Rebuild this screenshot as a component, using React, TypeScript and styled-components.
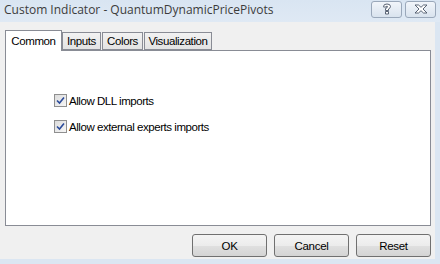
import React from 'react';
import styled, { createGlobalStyle } from 'styled-components';

const GlobalStyle = createGlobalStyle`
  html, body {
    margin: 0;
    padding: 0;
    background: #f0f0f0;
  }
`;

const uiFont = `'Liberation Sans', Arial, sans-serif`;

const Window = styled.div`
  width: 440px;
  height: 264px;
  display: flex;
  flex-direction: column;
  background: #dbe6f2;
  box-sizing: border-box;
  overflow: hidden;
`;

const TitleBar = styled.div`
  height: 22px;
  display: flex;
  align-items: center;
  justify-content: space-between;
  padding: 0 4px 0 4px;
  background: linear-gradient(#d9e5f2, #dfe9f4);
`;

const Title = styled.span`
  font-family: 'Open Sans', 'Noto Sans', sans-serif;
  font-size: 12px;
  color: #3c3c3c;
  margin-top: -3px;
`;

const TitleButtons = styled.div`
  display: flex;
  gap: 3px;
  margin-top: -4px;
`;

const TitleButton = styled.div`
  width: 29px;
  height: 15px;
  border: 1px solid #9aa8ba;
  border-radius: 3px;
  background: linear-gradient(#f1f5fa, #d9e3ee);
  display: flex;
  align-items: center;
  justify-content: center;
`;

const Body = styled.div`
  flex: 1;
  margin: 0 5px 5px 0;
  background: #f0f0f0;
  display: flex;
  flex-direction: column;
  padding: 8px 0 0 5px;
`;

const TabRow = styled.div`
  display: flex;
  align-items: flex-end;
  height: 20px;
  position: relative;
  z-index: 1;
`;

const Tab = styled.div<{ $active?: boolean; $w: number }>`
  font-family: ${uiFont};
  font-size: 11.5px;
  letter-spacing: -0.4px;
  color: #000;
  box-sizing: border-box;
  width: ${({ $w }) => $w}px;
  text-align: center;
  white-space: nowrap;
  height: ${({ $active }) => ($active ? '21px' : '18px')};
  padding-top: ${({ $active }) => ($active ? '4px' : '2px')};
  margin-right: ${({ $active }) => ($active ? '0' : '1px')};
  margin-bottom: ${({ $active }) => ($active ? '-1px' : '0')};
  border: 1px solid #898c95;
  border-bottom: ${({ $active }) => ($active ? 'none' : '1px solid #898c95')};
  background: ${({ $active }) => ($active ? '#ffffff' : 'linear-gradient(#f2f2f2, #e3e3e3)')};
`;

const Panel = styled.div`
  width: 426px;
  height: 176px;
  box-sizing: border-box;
  background: #fff;
  border: 1px solid #898c95;
  padding: 43px 0 0 48px;
  display: flex;
  flex-direction: column;
  gap: 13px;
`;

const CheckRow = styled.label`
  display: flex;
  align-items: center;
  gap: 2px;
  font-family: ${uiFont};
  font-size: 11.5px;
  letter-spacing: -0.45px;
  color: #000;
  height: 13px;
`;

const Box = styled.span`
  width: 13px;
  height: 13px;
  box-sizing: border-box;
  border: 1px solid #8f8f8f;
  background: linear-gradient(135deg, #dcdcdc, #f6f6f6);
  display: flex;
  align-items: center;
  justify-content: center;
`;

const Footer = styled.div`
  display: flex;
  justify-content: flex-end;
  gap: 7px;
  padding: 8px 0 0 0;
  width: 426px;
`;

const Button = styled.button`
  width: 75px;
  height: 23px;
  box-sizing: border-box;
  border: 1px solid #707070;
  border-radius: 3px;
  background: linear-gradient(#f4f4f4 0%, #ececec 50%, #e0e0e0 51%, #d4d4d4 100%);
  font-family: ${uiFont};
  font-size: 11.5px;
  letter-spacing: -0.3px;
  color: #000;
  padding: 0;
`;

const Check = () => (
  <svg width="9" height="9" viewBox="0 0 9 9">
    <path d="M1 4.5 L3.5 7 L8 1.5" fill="none" stroke="#2a4a9a" strokeWidth="1.6" />
  </svg>
);

const HelpGlyph = () => (
  <svg width="10" height="12" viewBox="0 0 10 12">
    <path
      d="M1.5 3.5 Q1.5 1 5 1 Q8.5 1 8.5 3.5 Q8.5 5 6.5 6 L6.5 7.5 L3.5 7.5 L3.5 5.5 Q5.5 4.8 5.5 3.8 Q5.5 3 5 3 Q4.3 3 4.3 4 L1.5 4 Z M3.5 8.5 L6.5 8.5 L6.5 11 L3.5 11 Z"
      fill="#fff"
      stroke="#4a5566"
      strokeWidth="0.9"
      strokeLinejoin="round"
    />
  </svg>
);

const CloseGlyph = () => (
  <svg width="14" height="10" viewBox="0 0 14 10">
    <path
      d="M1 1 L4.5 1 L7 3.3 L9.5 1 L13 1 L9 5 L13 9 L9.5 9 L7 6.7 L4.5 9 L1 9 L5 5 Z"
      fill="#fff"
      stroke="#4a5566"
      strokeWidth="0.9"
      strokeLinejoin="round"
    />
  </svg>
);

export default function App() {
  return (
    <>
      <GlobalStyle />
      <Window>
        <TitleBar>
          <Title>Custom Indicator - QuantumDynamicPricePivots</Title>
          <TitleButtons>
            <TitleButton>
              <HelpGlyph />
            </TitleButton>
            <TitleButton>
              <CloseGlyph />
            </TitleButton>
          </TitleButtons>
        </TitleBar>
        <Body>
          <TabRow>
            <Tab $active $w={57}>Common</Tab>
            <Tab $w={39}>Inputs</Tab>
            <Tab $w={41}>Colors</Tab>
            <Tab $w={68}>Visualization</Tab>
          </TabRow>
          <Panel>
            <CheckRow>
              <Box>
                <Check />
              </Box>
              Allow DLL imports
            </CheckRow>
            <CheckRow>
              <Box>
                <Check />
              </Box>
              Allow external experts imports
            </CheckRow>
          </Panel>
          <Footer>
            <Button>OK</Button>
            <Button>Cancel</Button>
            <Button>Reset</Button>
          </Footer>
        </Body>
      </Window>
    </>
  );
}
